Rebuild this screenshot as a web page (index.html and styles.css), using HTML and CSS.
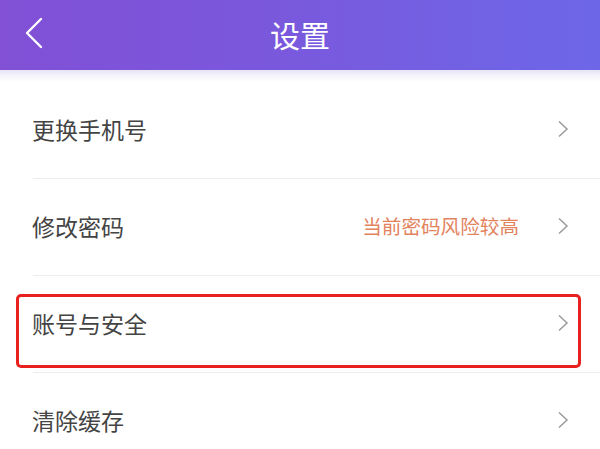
FILE: index.html
```html
<!DOCTYPE html>
<html lang="zh-CN">
<head>
<meta charset="utf-8">
<title>设置</title>
<link rel="stylesheet" href="styles.css">
</head>
<body>
<header class="topbar">
  <svg class="back" width="20" height="32" viewBox="0 0 20 32"><path d="M17 2 L3 16 L17 30" fill="none" stroke="#fff" stroke-width="2.4" stroke-linecap="round" stroke-linejoin="round"/></svg>
  <h1 class="title">设置</h1>
</header>
<div class="shade"></div>
<ul class="list">
  <li class="row"><span class="label">更换手机号</span><span class="right"><svg class="chev" width="12" height="18" viewBox="0 0 12 18"><path d="M2 1.5 L10 9 L2 16.5" fill="none" stroke="#9a9a9a" stroke-width="1.5"/></svg></span></li>
  <li class="row"><span class="label">修改密码</span><span class="right"><span class="warn">当前密码风险较高</span><svg class="chev" width="12" height="18" viewBox="0 0 12 18"><path d="M2 1.5 L10 9 L2 16.5" fill="none" stroke="#9a9a9a" stroke-width="1.5"/></svg></span></li>
  <li class="row highlighted"><span class="label">账号与安全</span><span class="right"><svg class="chev" width="12" height="18" viewBox="0 0 12 18"><path d="M2 1.5 L10 9 L2 16.5" fill="none" stroke="#9a9a9a" stroke-width="1.5"/></svg></span><span class="mark"></span></li>
  <li class="row"><span class="label">清除缓存</span><span class="right"><svg class="chev" width="12" height="18" viewBox="0 0 12 18"><path d="M2 1.5 L10 9 L2 16.5" fill="none" stroke="#9a9a9a" stroke-width="1.5"/></svg></span></li>
</ul>
</body>
</html>
```
FILE: styles.css
```css
* { box-sizing: border-box; }
html, body { margin: 0; padding: 0; }
body {
  width: 600px;
  height: 449px;
  overflow: hidden;
  background: #fff;
  font-family: "Noto Sans CJK SC", "Noto Sans", sans-serif;
}
.topbar {
  height: 70px;
  display: flex;
  align-items: center;
  justify-content: center;
  position: relative;
  background: linear-gradient(90deg, #8150d5 0%, #7a58dc 45%, #6d67e8 100%);
}
.back {
  position: absolute;
  left: 24px;
  top: 17px;
}
.title {
  margin: 0;
  color: #fff;
  font-size: 30px;
  font-weight: 400;
  line-height: 1;
  margin-top: -2px;
}
.shade {
  height: 12px;
  background: linear-gradient(180deg, #e6e3f6 0%, #f6f5fb 50%, #fff 100%);
}
.list {
  list-style: none;
  margin: 0;
  padding: 0;
}
.row {
  position: relative;
  height: 97px;
  margin-left: 33px;
  border-bottom: 1px solid #ececec;
  display: flex;
  align-items: center;
  justify-content: space-between;
  padding-right: 31px;
}
.label {
  font-size: 23px;
  color: #444;
  line-height: 1;
  margin-left: -1px;
  margin-top: -2px;
}
.right {
  display: flex;
  align-items: center;
  gap: 38px;
}
.warn {
  font-size: 19.6px;
  color: #e2835e;
  line-height: 1;
  margin-top: -2px;
}
.chev { display: block; margin-top: -2px; }
.mark {
  position: absolute;
  left: -17px;
  top: 18px;
  width: 565px;
  height: 74px;
  border: 3px solid #e8211f;
  border-radius: 5px;
}
```
